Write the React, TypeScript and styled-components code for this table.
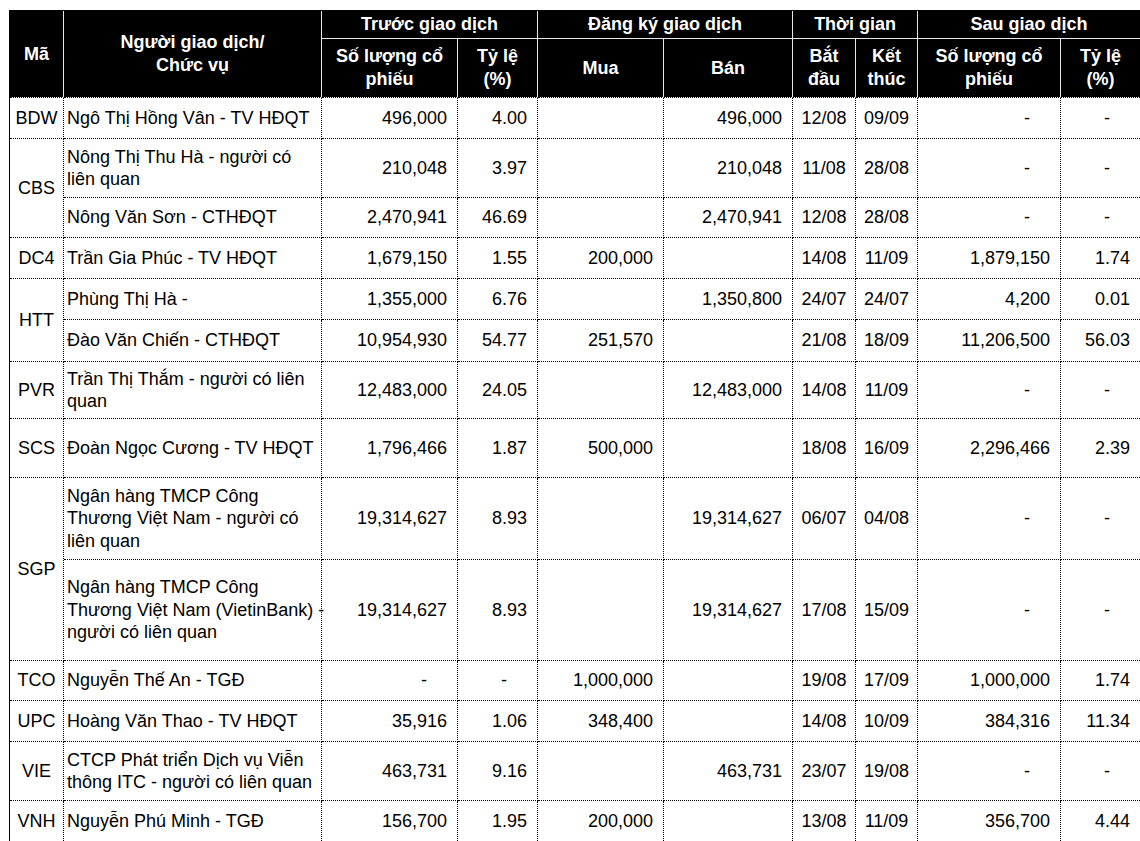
import React from 'react';
import styled, { createGlobalStyle } from 'styled-components';

const Global = createGlobalStyle`
  html, body { margin: 0; padding: 0; background: #fff; }
  body { padding: 10px 0 0 9px; font-family: "Liberation Sans", Arial, sans-serif; }
`;

const Table = styled.table`
  border-collapse: separate;
  border-spacing: 0;
  table-layout: fixed;
  width: 1131px;
  border: 1px solid #000;
  background: #fff;
  font-family: "Liberation Sans", Arial, sans-serif;
  font-size: 18px;
  color: #000;
`;

const HeadRow = styled.tr<{ $h: number }>`
  height: ${(p) => p.$h}px;
`;

const HeadCell = styled.th<{ $last?: boolean; $bottom?: 'white' | 'dotted' }>`
  background: #000;
  background-clip: padding-box;
  color: #fff;
  font-weight: bold;
  font-size: 18px;
  text-align: center;
  vertical-align: middle;
  line-height: 23px;
  padding: 0 2px;
  white-space: nowrap;
  border-right: ${(p) => (p.$last ? 'none' : '1px solid #e8e8e8')};
  border-bottom: ${(p) =>
    p.$bottom === 'white' ? '1px solid #e8e8e8' : '1px dotted #000'};
`;

const BodyRow = styled.tr<{ $h: number }>`
  height: ${(p) => p.$h}px;
`;

const Cell = styled.td<{ $align: 'left' | 'right' | 'center'; $last?: boolean; $lastRow?: boolean }>`
  text-align: ${(p) => p.$align};
  vertical-align: middle;
  line-height: 22.5px;
  white-space: nowrap;
  overflow: visible;
  padding: ${(p) => (p.$align === 'right' ? '0 10px 0 2px' : p.$align === 'left' ? '0 0 0 3px' : '0 1px')};
  border-right: ${(p) => (p.$last ? 'none' : '1px dotted #000')};
  border-bottom: ${(p) => (p.$lastRow ? 'none' : '1px dotted #000')};
`;

const Dash = styled.span`
  padding-right: 20px;
`;

type Row = {
  h: number;
  name: string[];
  sl: string;
  tl: string;
  mua: string;
  ban: string;
  bd: string;
  kt: string;
  sl2: string;
  tl2: string;
};

type Group = { code: string; rows: Row[] };

const r = (
  h: number,
  name: string[],
  sl: string,
  tl: string,
  mua: string,
  ban: string,
  bd: string,
  kt: string,
  sl2: string,
  tl2: string
): Row => ({ h, name, sl, tl, mua, ban, bd, kt, sl2, tl2 });

const groups: Group[] = [
  { code: 'BDW', rows: [r(41, ['Ngô Thị Hồng Vân - TV HĐQT'], '496,000', '4.00', '', '496,000', '12/08', '09/09', '-', '-')] },
  {
    code: 'CBS',
    rows: [
      r(59, ['Nông Thị Thu Hà - người có', 'liên quan'], '210,048', '3.97', '', '210,048', '11/08', '28/08', '-', '-'),
      r(40, ['Nông Văn Sơn - CTHĐQT'], '2,470,941', '46.69', '', '2,470,941', '12/08', '28/08', '-', '-'),
    ],
  },
  { code: 'DC4', rows: [r(41, ['Trần Gia Phúc - TV HĐQT'], '1,679,150', '1.55', '200,000', '', '14/08', '11/09', '1,879,150', '1.74')] },
  {
    code: 'HTT',
    rows: [
      r(41, ['Phùng Thị Hà -'], '1,355,000', '6.76', '', '1,350,800', '24/07', '24/07', '4,200', '0.01'),
      r(42, ['Đào Văn Chiến - CTHĐQT'], '10,954,930', '54.77', '251,570', '', '21/08', '18/09', '11,206,500', '56.03'),
    ],
  },
  { code: 'PVR', rows: [r(57, ['Trần Thị Thắm - người có liên', 'quan'], '12,483,000', '24.05', '', '12,483,000', '14/08', '11/09', '-', '-')] },
  { code: 'SCS', rows: [r(59, ['Đoàn Ngọc Cương - TV HĐQT'], '1,796,466', '1.87', '500,000', '', '18/08', '16/09', '2,296,466', '2.39')] },
  {
    code: 'SGP',
    rows: [
      r(82, ['Ngân hàng TMCP Công', 'Thương Việt Nam - người có', 'liên quan'], '19,314,627', '8.93', '', '19,314,627', '06/07', '04/08', '-', '-'),
      r(101, ['Ngân hàng TMCP Công', 'Thương Việt Nam (VietinBank) -', 'người có liên quan'], '19,314,627', '8.93', '', '19,314,627', '17/08', '15/09', '-', '-'),
    ],
  },
  { code: 'TCO', rows: [r(40, ['Nguyễn Thế An - TGĐ'], '-', '-', '1,000,000', '', '19/08', '17/09', '1,000,000', '1.74')] },
  { code: 'UPC', rows: [r(41, ['Hoàng Văn Thao - TV HĐQT'], '35,916', '1.06', '348,400', '', '14/08', '10/09', '384,316', '11.34')] },
  { code: 'VIE', rows: [r(59, ['CTCP Phát triển Dịch vụ Viễn', 'thông ITC - người có liên quan'], '463,731', '9.16', '', '463,731', '23/07', '19/08', '-', '-')] },
  { code: 'VNH', rows: [r(40, ['Nguyễn Phú Minh - TGĐ'], '156,700', '1.95', '200,000', '', '13/08', '11/09', '356,700', '4.44')] },
];

const widths = [54, 258, 136, 80, 126, 129, 63, 62, 143, 79];

const num = (v: string) => (v === '-' ? <Dash>-</Dash> : v);

const Lines: React.FC<{ lines: string[] }> = ({ lines }) => (
  <>
    {lines.map((l, i) => (
      <React.Fragment key={i}>
        {i > 0 && <br />}
        {l}
      </React.Fragment>
    ))}
  </>
);

export default function App() {
  const lastGroup = groups.length - 1;
  return (
    <>
      <Global />
      <Table>
        <colgroup>
          {widths.map((w, i) => (
            <col key={i} style={{ width: w }} />
          ))}
        </colgroup>
        <thead>
          <HeadRow $h={28}>
            <HeadCell rowSpan={2}>Mã</HeadCell>
            <HeadCell rowSpan={2}>
              Người giao dịch/
              <br />
              Chức vụ
            </HeadCell>
            <HeadCell colSpan={2} $bottom="white">Trước giao dịch</HeadCell>
            <HeadCell colSpan={2} $bottom="white">Đăng ký giao dịch</HeadCell>
            <HeadCell colSpan={2} $bottom="white">Thời gian</HeadCell>
            <HeadCell colSpan={2} $bottom="white" $last>Sau giao dịch</HeadCell>
          </HeadRow>
          <HeadRow $h={59}>
            <HeadCell>
              Số lượng cổ
              <br />
              phiếu
            </HeadCell>
            <HeadCell>
              Tỷ lệ
              <br />
              (%)
            </HeadCell>
            <HeadCell>Mua</HeadCell>
            <HeadCell>Bán</HeadCell>
            <HeadCell>
              Bắt
              <br />
              đầu
            </HeadCell>
            <HeadCell>
              Kết
              <br />
              thúc
            </HeadCell>
            <HeadCell>
              Số lượng cổ
              <br />
              phiếu
            </HeadCell>
            <HeadCell $last>
              Tỷ lệ
              <br />
              (%)
            </HeadCell>
          </HeadRow>
        </thead>
        <tbody>
          {groups.map((g, gi) =>
            g.rows.map((row, ri) => {
              const lastRow = gi === lastGroup && ri === g.rows.length - 1;
              return (
                <BodyRow key={`${g.code}-${ri}`} $h={row.h}>
                  {ri === 0 && (
                    <Cell $align="center" rowSpan={g.rows.length} $lastRow={gi === lastGroup}>
                      {g.code}
                    </Cell>
                  )}
                  <Cell $align="left" $lastRow={lastRow}>
                    <Lines lines={row.name} />
                  </Cell>
                  <Cell $align="right" $lastRow={lastRow}>{num(row.sl)}</Cell>
                  <Cell $align="right" $lastRow={lastRow}>{num(row.tl)}</Cell>
                  <Cell $align="right" $lastRow={lastRow}>{row.mua}</Cell>
                  <Cell $align="right" $lastRow={lastRow}>{row.ban}</Cell>
                  <Cell $align="center" $lastRow={lastRow}>{row.bd}</Cell>
                  <Cell $align="center" $lastRow={lastRow}>{row.kt}</Cell>
                  <Cell $align="right" $lastRow={lastRow}>{num(row.sl2)}</Cell>
                  <Cell $align="right" $last $lastRow={lastRow}>{num(row.tl2)}</Cell>
                </BodyRow>
              );
            })
          )}
        </tbody>
      </Table>
    </>
  );
}
